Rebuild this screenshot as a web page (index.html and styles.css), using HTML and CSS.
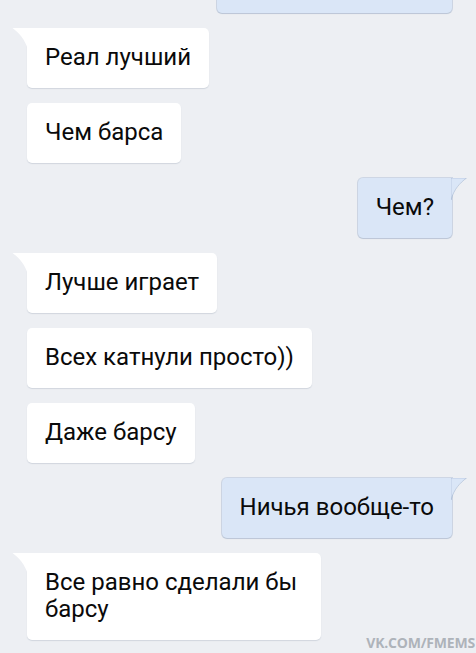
FILE: index.html
```html
<!DOCTYPE html>
<html lang="ru">
  <head>
    <meta charset="UTF-8" />
    <meta name="viewport" content="width=device-width, initial-scale=1.0" />
    <title>Чат</title>
    <link rel="stylesheet" href="styles.css">
  </head>
  <body>
    <div class="chat">
      <div class="msg out first"><div class="bubble"></div></div>

      <div class="msg in">
        <div class="bubble">
          <svg class="tail" width="16" height="22" viewBox="0 0 16 22"><path d="M16 0 H0.5 C7 5 13 11 16 22 Z" /></svg>
          Реал лучший
        </div>
      </div>
      <div class="msg in"><div class="bubble">Чем барса</div></div>

      <div class="msg out">
        <div class="bubble">
          <svg class="tail" width="16" height="22" viewBox="0 0 16 22"><path d="M0 0 H15.5 C9 5 3 11 0 22 Z" /></svg>
          Чем?
        </div>
      </div>

      <div class="msg in">
        <div class="bubble">
          <svg class="tail" width="16" height="22" viewBox="0 0 16 22"><path d="M16 0 H0.5 C7 5 13 11 16 22 Z" /></svg>
          Лучше играет
        </div>
      </div>
      <div class="msg in"><div class="bubble">Всех катнули просто))</div></div>
      <div class="msg in"><div class="bubble">Даже барсу</div></div>

      <div class="msg out">
        <div class="bubble">
          <svg class="tail" width="16" height="22" viewBox="0 0 16 22"><path d="M0 0 H15.5 C9 5 3 11 0 22 Z" /></svg>
          Ничья вообще-то
        </div>
      </div>

      <div class="msg in">
        <div class="bubble wide">
          <svg class="tail" width="16" height="22" viewBox="0 0 16 22"><path d="M16 0 H0.5 C7 5 13 11 16 22 Z" /></svg>
          Все равно сделали бы барсу
        </div>
      </div>
    </div>
    <div class="mark">VK.COM/FMEMS</div>
  </body>
</html>
```

FILE: styles.css
```css
* {
  margin: 0;
  padding: 0;
  box-sizing: border-box;
}
html,
body {
  width: 476px;
  height: 653px;
  overflow: hidden;
}
body {
  position: relative;
  background: #edeff3;
  font-family: Roboto, "Noto Sans", sans-serif;
  color: #0a0a0a;
}
.chat {
  display: flex;
  flex-direction: column;
  gap: 15px;
  padding: 0 24px 0 27px;
}
.msg {
  display: flex;
}
.msg.out {
  justify-content: flex-end;
}
.msg.first {
  margin-top: -47px;
}
.msg.first .bubble {
  width: 235px;
  height: 60px;
}
.bubble {
  position: relative;
  padding: 16px 18px 17px;
  font-size: 24px;
  line-height: 27px;
  border-radius: 5px;
  background: #fff;
  box-shadow: 0 1px 1px rgba(60, 80, 110, 0.16);
}
.bubble.wide {
  width: 294px;
}
.out .bubble {
  background: #dae6f7;
  box-shadow: 0 0 0 1px rgba(150, 170, 200, 0.35), 0 1px 1px rgba(60, 80, 110, 0.16);
}
.tail {
  position: absolute;
  top: 0;
}
.in .tail {
  left: -15px;
  fill: #fff;
}
.in .bubble:has(.tail) {
  border-top-left-radius: 0;
}
.out .tail {
  right: -15px;
  fill: #dae6f7;
  stroke: rgba(150, 170, 200, 0.45);
  stroke-width: 1;
}
.out .bubble:has(.tail) {
  border-top-right-radius: 0;
}
.mark {
  position: absolute;
  right: 1px;
  bottom: 1px;
  font-family: "Open Sans", sans-serif;
  font-weight: 700;
  font-size: 14px;
  letter-spacing: -0.2px;
  color: #aeb3ba;
}
```
